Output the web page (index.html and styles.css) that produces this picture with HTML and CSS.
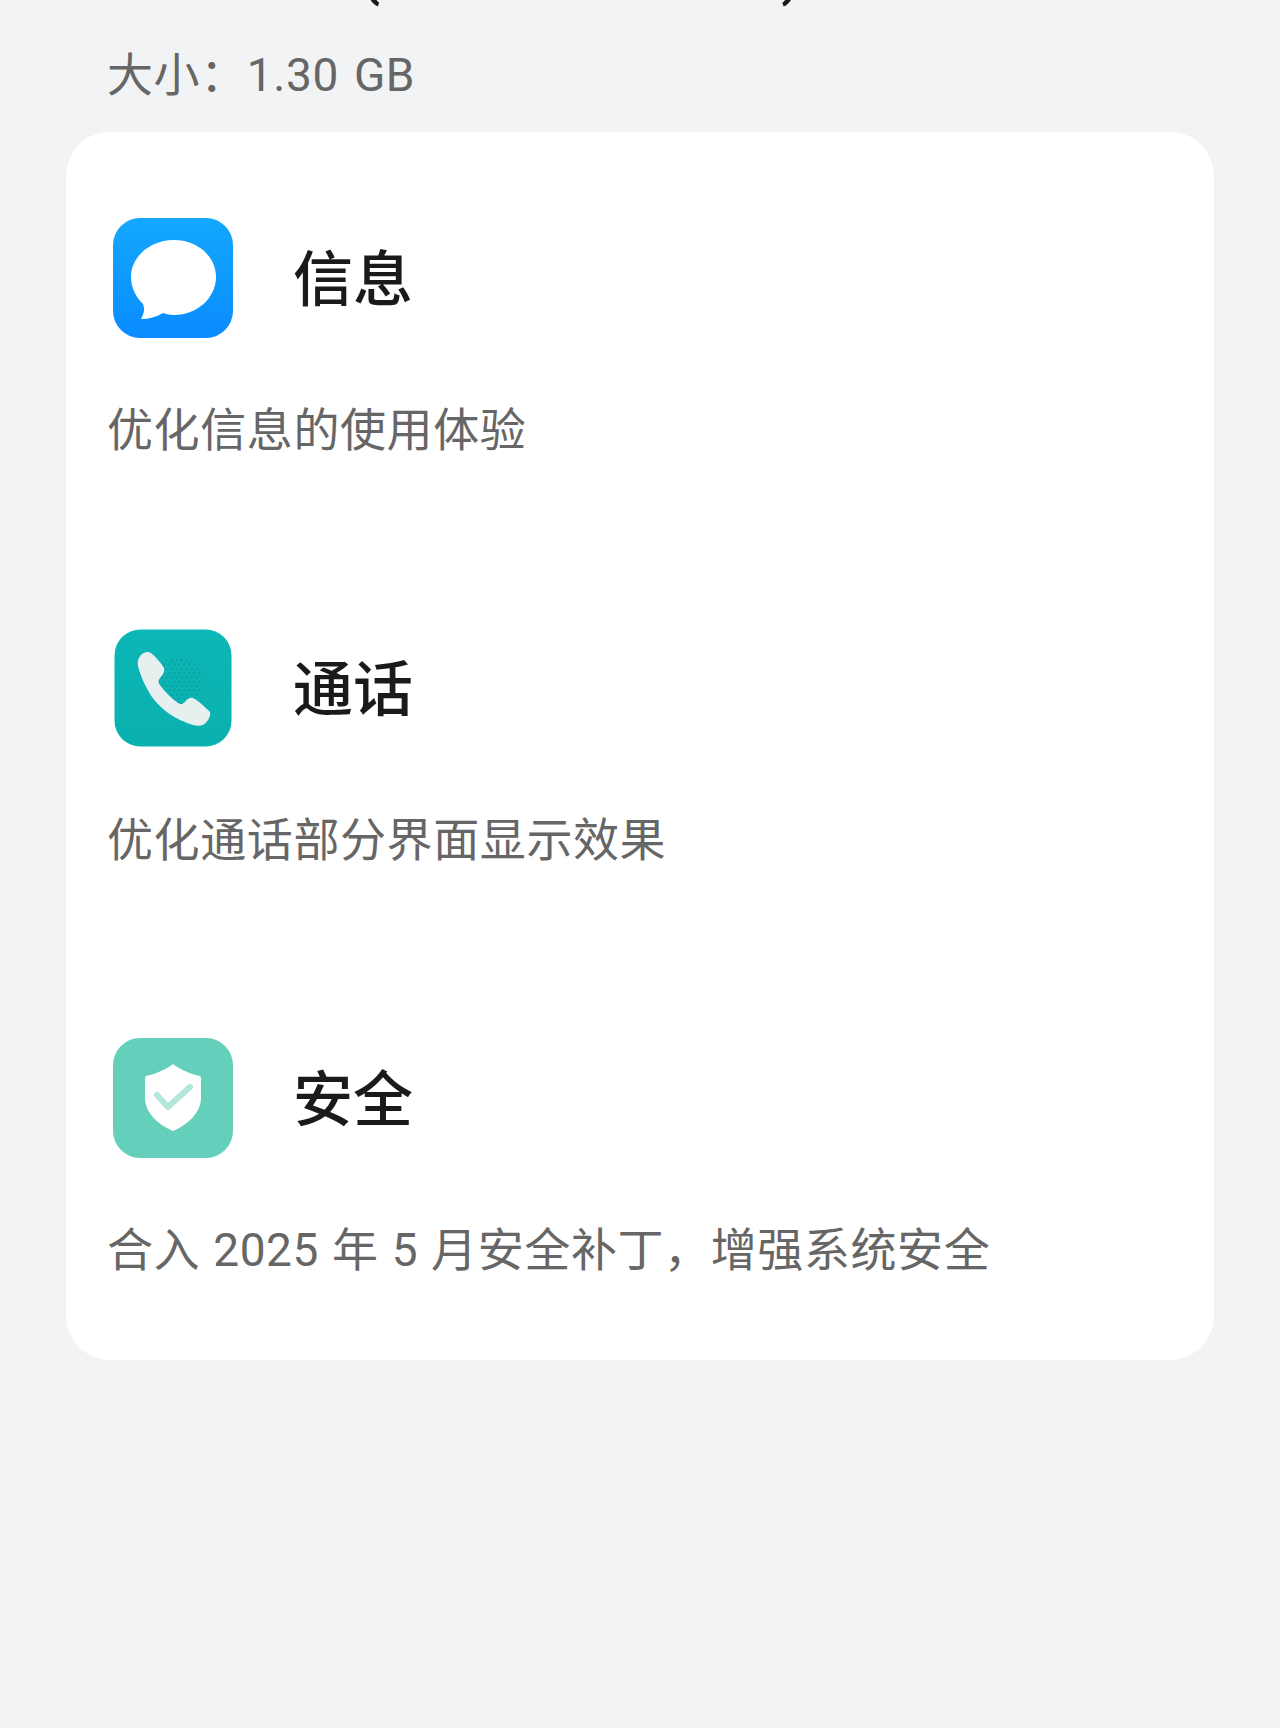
FILE: index.html
```html
<!DOCTYPE html>
<html lang="zh-CN">
<head>
    <meta charset="UTF-8">
    <meta name="viewport" content="width=device-width, initial-scale=1.0">
    <title>更新日志</title>
    <link rel="stylesheet" href="styles.css">
</head>
<body>

    <!-- Heading is cut off by the top of the screen, only the bracket tails show -->
    <div class="cut-title">
        <span>(</span>
        <span>)</span>
    </div>

    <p class="size">大小：1.30 GB</p>

    <div class="card">

        <div class="item">
            <div class="item-head">
                <svg class="app-icon" viewBox="0 0 120 120">
                    <defs>
                        <linearGradient id="blue" x1="0" y1="0" x2="0" y2="1">
                            <stop offset="0" stop-color="#14a8fd"/>
                            <stop offset="1" stop-color="#0a8bff"/>
                        </linearGradient>
                    </defs>
                    <rect width="120" height="120" rx="27" fill="url(#blue)"/>
                    <path d="M61 22C84 22 103 38 103 59C103 80 84 97 61 97C57 97 53 96 50 95C43 99 36 101 28 101C31 96 32 91 30 86C23 79 18 70 18 59C18 38 38 22 61 22Z" fill="#fff"/>
                </svg>
                <h2>信息</h2>
            </div>
            <p class="desc">优化信息的使用体验</p>
        </div>

        <div class="item">
            <div class="item-head">
                <svg class="app-icon" viewBox="0 0 120 120">
                    <defs>
                        <linearGradient id="teal" x1="0" y1="0" x2="0" y2="1">
                            <stop offset="0" stop-color="#0cb7b7"/>
                            <stop offset="1" stop-color="#09b0ae"/>
                        </linearGradient>
                        <pattern id="dots" width="5" height="8.6" patternUnits="userSpaceOnUse">
                            <circle cx="1.2" cy="2.1" r="1" fill="#089a99"/>
                            <circle cx="3.7" cy="6.4" r="1" fill="#089a99"/>
                        </pattern>
                    </defs>
                    <rect x="1.5" y="1.5" width="117" height="117" rx="26" fill="url(#teal)"/>
                    <circle cx="65" cy="53" r="24" fill="url(#dots)"/>
                    <path d="M28 27C31 24 35 23 38 25C43 29 48 35 51 40C52 43 50 47 47 50C45 52 45 55 47 57C52 64 58 70 65 75C67 77 70 76 72 74C74 71 77 69 80 70C86 73 92 79 97 84C98 88 95 94 90 97C87 98 84 98 80 97C64 92 49 83 39 69C32 58 27 47 25 38C24 34 25 30 28 27Z" fill="#e6f0ee"/>
                </svg>
                <h2>通话</h2>
            </div>
            <p class="desc">优化通话部分界面显示效果</p>
        </div>

        <div class="item">
            <div class="item-head">
                <svg class="app-icon" viewBox="0 0 120 120">
                    <rect width="120" height="120" rx="27" fill="#64d0bb"/>
                    <path d="M60 26C68 32 78 36 87 38C88 39 88 40 88 42V60C88 75 74 87 60 93C46 87 32 75 32 60V42C32 40 32 39 33 38C42 36 52 32 60 26Z" fill="#fff"/>
                    <path d="M44 57L55 69L77 49" fill="none" stroke="#b4e6da" stroke-width="6" stroke-linecap="round" stroke-linejoin="round"/>
                </svg>
                <h2>安全</h2>
            </div>
            <p class="desc">合入 2025 年 5 月安全补丁，增强系统安全</p>
        </div>

    </div>

</body>
</html>
```

FILE: styles.css
```css
body {
    margin: 0;
    background-color: #f2f3f5;
    font-family: 'Roboto', 'Noto Sans CJK SC', sans-serif;
}
.cut-title {
    display: flex;
    gap: 401px;
    height: 8px;
    padding-left: 362px;
    overflow: hidden;
    color: #1a1a1a;
    font-size: 52px;
    font-weight: 700;
    line-height: 8px;
}
.cut-title span {
    display: block;
    margin-top: -26px;
}
.size {
    margin: 36px 0 0 107px;
    color: #666;
    font-size: 46px;
    letter-spacing: 0.6px;
    word-spacing: 3px;
    line-height: 62px;
}
.card {
    width: 1148px;
    height: 1228px;
    box-sizing: border-box;
    margin: 26px 0 0 66px;
    padding: 86px 47px 0;
    background-color: #fff;
    border-radius: 44px;
}
.item {
    height: 410px;
}
.item-head {
    display: flex;
    align-items: center;
    gap: 60px;
}
.app-icon {
    width: 120px;
    height: 120px;
    flex-shrink: 0;
}
.item-head h2 {
    margin: 6px 0 0;
    color: #1a1a1a;
    font-size: 60px;
    font-weight: 500;
    line-height: 80px;
}
.desc {
    margin: 60px 0 0 -6px;
    color: #666;
    font-size: 46px;
    letter-spacing: 0.6px;
    word-spacing: 1px;
    line-height: 64px;
}
```
